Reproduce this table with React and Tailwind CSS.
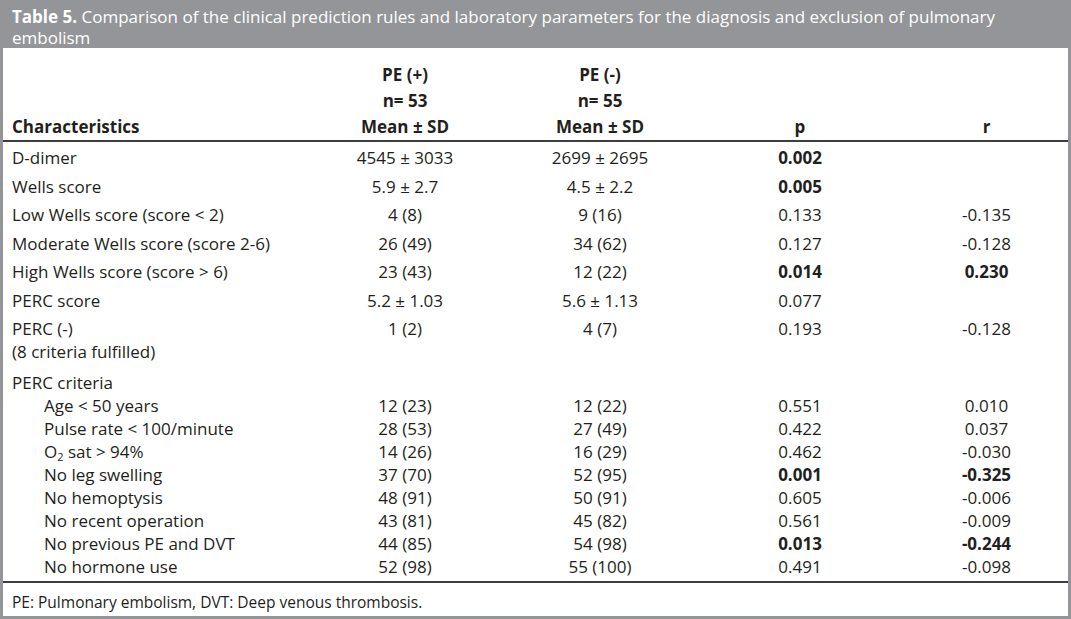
import React from 'react';

const rows = [
  { label: 'D-dimer', pos: '4545 ± 3033', neg: '2699 ± 2695', p: '0.002', pBold: true, r: '' },
  { label: 'Wells score', pos: '5.9 ± 2.7', neg: '4.5 ± 2.2', p: '0.005', pBold: true, r: '' },
  { label: 'Low Wells score (score < 2)', pos: '4 (8)', neg: '9 (16)', p: '0.133', r: '-0.135' },
  { label: 'Moderate Wells score (score 2-6)', pos: '26 (49)', neg: '34 (62)', p: '0.127', r: '-0.128' },
  { label: 'High Wells score (score > 6)', pos: '23 (43)', neg: '12 (22)', p: '0.014', pBold: true, r: '0.230', rBold: true },
  { label: 'PERC score', pos: '5.2 ± 1.03', neg: '5.6 ± 1.13', p: '0.077', r: '' },
];

const criteria = [
  { label: 'Age < 50 years', pos: '12 (23)', neg: '12 (22)', p: '0.551', r: '0.010' },
  { label: 'Pulse rate < 100/minute', pos: '28 (53)', neg: '27 (49)', p: '0.422', r: '0.037' },
  {
    label: (
      <>
        O<sub className="text-[11px] relative top-[3px] align-baseline">2</sub> sat &gt; 94%
      </>
    ),
    pos: '14 (26)',
    neg: '16 (29)',
    p: '0.462',
    r: '-0.030',
  },
  { label: 'No leg swelling', pos: '37 (70)', neg: '52 (95)', p: '0.001', pBold: true, r: '-0.325', rBold: true },
  { label: 'No hemoptysis', pos: '48 (91)', neg: '50 (91)', p: '0.605', r: '-0.006' },
  { label: 'No recent operation', pos: '43 (81)', neg: '45 (82)', p: '0.561', r: '-0.009' },
  { label: 'No previous PE and DVT', pos: '44 (85)', neg: '54 (98)', p: '0.013', pBold: true, r: '-0.244', rBold: true },
  { label: 'No hormone use', pos: '52 (98)', neg: '55 (100)', p: '0.491', r: '-0.098' },
];

const Cells = ({ row }) => (
  <>
    <td className="text-center">{row.pos}</td>
    <td className="text-center">{row.neg}</td>
    <td className={`text-center ${row.pBold ? 'font-bold' : ''}`}>{row.p}</td>
    <td className={`text-center ${row.rBold ? 'font-bold' : ''}`}>{row.r}</td>
  </>
);

const App = () => {
  return (
    <div className="w-[1071px] h-[619px] bg-[#939598] px-[3px] pb-[3px] flex flex-col font-['Open_Sans',sans-serif]">
      {/* Caption */}
      <div className="h-[48px] pt-[6px] pl-[9px] text-white text-[17px] leading-[21px]">
        <span className="font-bold">Table 5.</span> Comparison of the clinical prediction rules and laboratory
        parameters for the diagnosis and exclusion of pulmonary
        <br />
        embolism
      </div>

      <div className="flex-1 bg-white flex flex-col text-[17px] text-[#231f20]">
        <table className="w-full table-fixed border-collapse">
          <colgroup>
            <col className="w-[302px]" />
            <col className="w-[200px]" />
            <col className="w-[190px]" />
            <col className="w-[210px]" />
            <col className="w-[163px]" />
          </colgroup>
          <thead>
            <tr className="border-b-2 border-[#3d3d3d] align-bottom font-bold leading-[26px]">
              <th className="pl-[9px] pt-[14px] text-left">Characteristics</th>
              <th className="pt-[14px] text-center">
                PE (+)
                <br />
                n= 53
                <br />
                Mean ± SD
              </th>
              <th className="pt-[14px] text-center">
                PE (-)
                <br />
                n= 55
                <br />
                Mean ± SD
              </th>
              <th className="pt-[14px] text-center">p</th>
              <th className="pt-[14px] text-center">r</th>
            </tr>
          </thead>
          <tbody className="leading-[22.5px] align-top">
            {rows.map((row, i) => (
              <tr key={row.label} className={i === 0 ? '[&>td]:pt-[5px] [&>td]:pb-[3px]' : '[&>td]:py-[3px]'}>
                <td className="pl-[9px]">{row.label}</td>
                <Cells row={row} />
              </tr>
            ))}
            <tr className="[&>td]:py-[3px]">
              <td className="pl-[9px]">
                PERC (-)
                <br />
                (8 criteria fulfilled)
              </td>
              <Cells row={{ pos: '1 (2)', neg: '4 (7)', p: '0.193', r: '-0.128' }} />
            </tr>
            <tr className="leading-[23px]">
              <td className="pl-[9px] pt-[5px]" colSpan={5}>
                PERC criteria
              </td>
            </tr>
            {criteria.map((row, i) => (
              <tr
                key={i}
                className={`leading-[23px] ${i === criteria.length - 1 ? 'border-b-2 border-[#3d3d3d] [&>td]:pb-[3px]' : ''}`}
              >
                <td className="pl-[41px]">{row.label}</td>
                <Cells row={row} />
              </tr>
            ))}
          </tbody>
        </table>

        {/* Footnote */}
        <div className="pl-[9px] pt-[9px] text-[15.5px] leading-[20px]">
          PE: Pulmonary embolism, DVT: Deep venous thrombosis.
        </div>
      </div>
    </div>
  );
};

export default App;
